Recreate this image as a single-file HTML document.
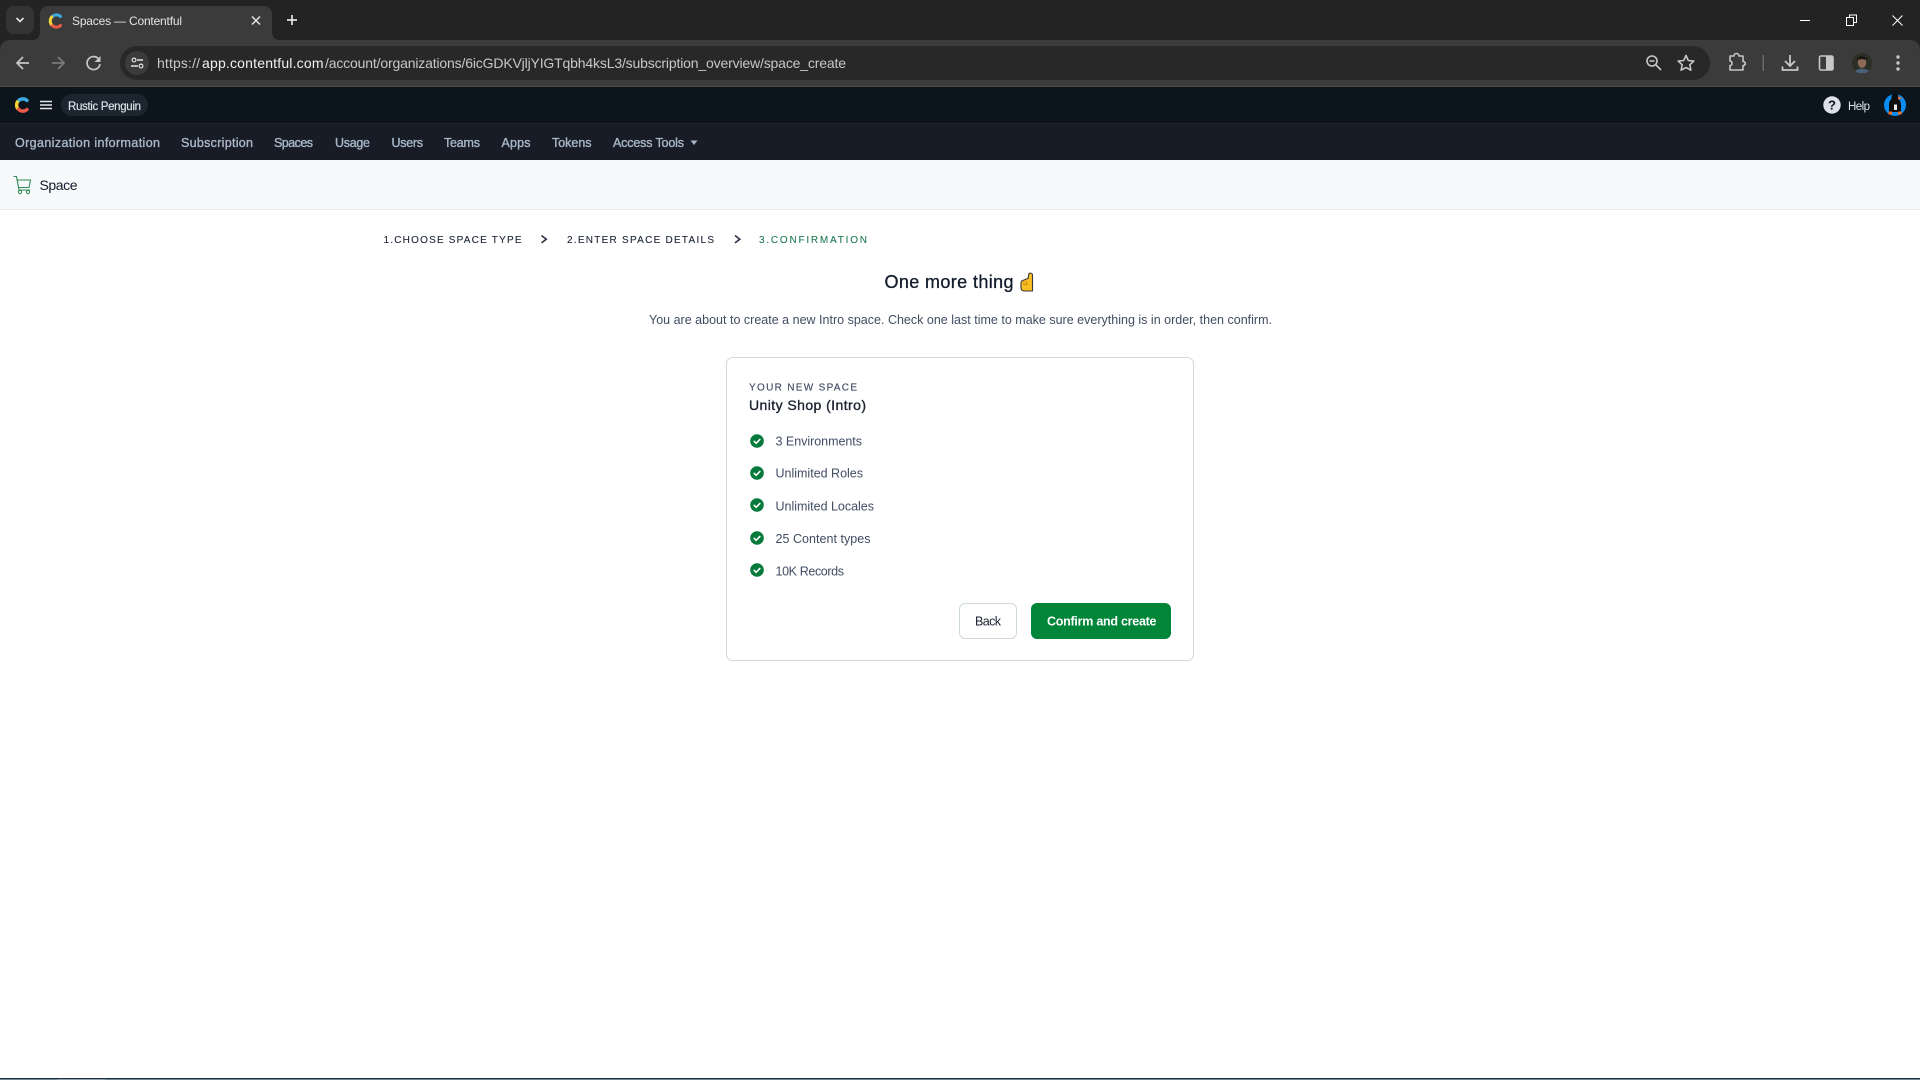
<!DOCTYPE html>
<html lang="en">
<head>
<meta charset="utf-8">
<title>Spaces — Contentful</title>
<style>
html,body{margin:0;padding:0;width:1920px;height:1080px;overflow:hidden;background:#fff}
svg{display:block;position:absolute;left:0;top:0}
text{font-family:"Liberation Sans",Arial,sans-serif;white-space:pre}
.nav{font-size:12.5px;fill:#aab7c8;stroke:#aab7c8;stroke-width:.35}
.li{font-size:12.5px;fill:#414d63}
.st{font-size:10px;fill:#1a2434;stroke:#1a2434;stroke-width:.1}
</style>
</head>
<body>
<svg width="1920" height="1080" viewBox="0 0 1920 1080" xmlns="http://www.w3.org/2000/svg">
<rect width="1920" height="1080" fill="#fff"/>
<!-- tab strip -->
<rect width="1920" height="52" fill="#222322"/>
<rect x="6" y="6" width="28" height="28" rx="8" fill="#333433"/>
<path d="M16.500 18l3.500 3.500 3.500-3.500" fill="none" stroke="#e3e3e3" stroke-width="1.600"/>
<!-- toolbar -->
<path d="M0 50c0-6 4-10 10-10h1900c6 0 10 4 10 10v37H0z" fill="#3b3b3b"/>
<path d="M32 40c5 0 8-3 8-8V14c0-4.500 3.500-8 8-8h216c4.500 0 8 3.500 8 8v18c0 5 3 8 8 8z" fill="#3b3b3b"/>
<path d="M60.500 16.500A6 6 0 0 0 52.500 16.300" fill="none" stroke="#3fa9e0" stroke-width="3" stroke-linecap="round"/>
<path d="M52.500 16.300A6 6 0 0 0 52.500 25.700" fill="none" stroke="#f7d432" stroke-width="3"/>
<path d="M52.500 25.700A6 6 0 0 0 60.500 25.500" fill="none" stroke="#ea5a47" stroke-width="3" stroke-linecap="round"/>
<text x="72" y="25" font-size="12" fill="#e3e3e3" textLength="110" lengthAdjust="spacing">Spaces — Contentful</text>
<path d="M252 16.500l8 8m0-8l-8 8" stroke="#e3e3e3" stroke-width="1.500" fill="none"/>
<path d="M292 15v10m-5-5h10" stroke="#e3e3e3" stroke-width="1.700" fill="none"/>
<!-- window controls -->
<path d="M1800 20.500h10" stroke="#fff" stroke-width="1"/>
<path d="M1846.500 17.500h7v8h-7z M1849.500 17.500v-2.500h7v7.500h-3" fill="none" stroke="#fff" stroke-width="1"/>
<path d="M1892.500 15.500l10 10m0-10l-10 10" stroke="#fff" stroke-width="1" fill="none"/>
<rect x="0" y="86" width="1920" height="1" fill="#4a4a4a"/>
<path d="M29 63H17m6-6l-6 6 6 6" fill="none" stroke="#c7c7c7" stroke-width="1.700"/>
<path d="M52 63h11m-5-6l6 6-6 6" fill="none" stroke="#7b7b7b" stroke-width="1.700"/>
<path d="M99.300 60A6.500 6.500 0 1 0 100 64" fill="none" stroke="#c7c7c7" stroke-width="1.700"/>
<path d="M100.500 56v6h-6z" fill="#c7c7c7"/>
<rect x="120" y="46" width="1590" height="34" rx="17" fill="#282828"/>
<circle cx="137" cy="63" r="12" fill="#3b3b3b"/>
<path d="M137 60h6M131 66h7" stroke="#e3e3e3" stroke-width="1.400" fill="none"/>
<circle cx="134" cy="60" r="1.900" fill="none" stroke="#e3e3e3" stroke-width="1.200"/>
<circle cx="141" cy="66" r="1.900" fill="none" stroke="#e3e3e3" stroke-width="1.200"/>
<text x="157" y="68" font-size="14" textLength="43" lengthAdjust="spacing" fill="#c7c7c7">https://</text>
<text x="202" y="68" font-size="14" textLength="121.500" lengthAdjust="spacing" fill="#f1f1f1">app.contentful.com</text>
<text x="325" y="68" font-size="14" textLength="521" lengthAdjust="spacing" fill="#c7c7c7">/account/organizations/6icGDKVjljYIGTqbh4ksL3/subscription_overview/space_create</text>
<circle cx="1652" cy="61" r="5" fill="none" stroke="#c7c7c7" stroke-width="1.600"/>
<path d="M1649.500 61h5M1656 65l5 5" stroke="#c7c7c7" stroke-width="1.600" fill="none"/>
<path d="M1686 55.500l2.300 5 5.500.6-4 3.700 1.100 5.400-4.900-2.700-4.900 2.700 1.100-5.400-4-3.700 5.500-.6z" fill="none" stroke="#c7c7c7" stroke-width="1.600" stroke-linejoin="round"/>
<path d="M1730 56h4c0-1.500 1-2.500 2.500-2.500s2.500 1 2.500 2.500h4v5.500c1.500 0 2.200.9 2.200 2s-.7 2-2.200 2V70h-13v-4.500c1.200 0 2-.9 2-2.200s-.8-2.300-2-2.300z" fill="none" stroke="#c7c7c7" stroke-width="1.600" stroke-linejoin="round"/>
<rect x="1762.500" y="55" width="1.500" height="16" fill="#6a6a6a"/>
<path d="M1790 55v11m-5-5l5 5 5-5M1782.500 66.500v3.500h15v-3.500" fill="none" stroke="#c7c7c7" stroke-width="1.800"/>
<rect x="1819.500" y="56" width="13.500" height="14" rx="1.500" fill="none" stroke="#c7c7c7" stroke-width="1.600"/>
<rect x="1826" y="56" width="7" height="14" fill="#c7c7c7"/>
<circle cx="1862" cy="63" r="10" fill="#2a2f26"/>
<ellipse cx="1862" cy="62.500" rx="4.200" ry="5.500" fill="#8d6a55"/>
<path d="M1857 60c0-5 10-5 10 0l-1 0c-2-1-6-1-8 0z" fill="#1c1712"/>
<path d="M1855 71c3-3 11-3 14 0l-3 2h-8z" fill="#4a6078"/>
<circle cx="1898" cy="57" r="1.700" fill="#c7c7c7"/>
<circle cx="1898" cy="63" r="1.700" fill="#c7c7c7"/>
<circle cx="1898" cy="69" r="1.700" fill="#c7c7c7"/>
<!-- app nav -->
<rect y="87" width="1920" height="36" fill="#0c141c"/>
<rect y="123" width="1920" height="37" fill="#171c26"/>
<rect y="123" width="1920" height="1" fill="#1f2631"/>
<path d="M27 100.500A6 6 0 0 0 18.500 100.800" fill="none" stroke="#3fa9e0" stroke-width="3.400" stroke-linecap="round"/>
<path d="M18 101A6.500 6.500 0 0 0 18 109" fill="none" stroke="#f7d432" stroke-width="3.400"/>
<path d="M18.500 109.200A6 6 0 0 0 27 109.500" fill="none" stroke="#ea5a47" stroke-width="3.400" stroke-linecap="round"/>
<path d="M40 101.500h12M40 105h12M40 108.500h12" stroke="#e6e9ec" stroke-width="1.400"/>
<rect x="61" y="94" width="87" height="22" rx="11" fill="#1d2630"/>
<text x="68" y="110" font-size="11.500" fill="#dde3ea" stroke="#dde3ea" stroke-width=".15" textLength="73" lengthAdjust="spacing">Rustic Penguin</text>
<text class="nav" x="15" y="147" textLength="145" lengthAdjust="spacing">Organization information</text>
<text class="nav" x="181" y="147" textLength="72" lengthAdjust="spacing">Subscription</text>
<text class="nav" x="274" y="147" textLength="39" lengthAdjust="spacing">Spaces</text>
<text class="nav" x="335" y="147" textLength="35" lengthAdjust="spacing">Usage</text>
<text class="nav" x="391.500" y="147" textLength="31.500" lengthAdjust="spacing">Users</text>
<text class="nav" x="444" y="147" textLength="36" lengthAdjust="spacing">Teams</text>
<text class="nav" x="501.500" y="147" textLength="29" lengthAdjust="spacing">Apps</text>
<text class="nav" x="552" y="147" textLength="39.500" lengthAdjust="spacing">Tokens</text>
<text class="nav" x="613" y="147" textLength="71" lengthAdjust="spacing">Access Tools</text>
<path d="M690.500 140.500h7l-3.500 4.500z" fill="#aab7c8"/>
<circle cx="1832" cy="105" r="8.700" fill="#dbe2e9"/>
<text x="1832" y="109.500" font-size="13" font-weight="bold" fill="#0c141c" text-anchor="middle">?</text>
<text x="1848" y="110" font-size="11.500" fill="#dde3ea" textLength="22" lengthAdjust="spacing">Help</text>
<circle cx="1895" cy="105" r="11" fill="#0a8cf0"/>
<path d="M1889 112v-7c0-3 1-5 2.500-6v-2c0-2.500 1.500-3.500 3.500-3.500s3.500 1 3.500 3.500v2c1.500 1 2.500 3 2.500 6v7z" fill="#0e0e0e"/>
<path d="M1898 96.500l4.500 1.800-4.500 1.200z" fill="#f26b1d"/>
<path d="M1894 104.500h3v5.500h-3z" fill="#e8e8e8"/>
<path d="M1888.500 111.500h3.500v3h-3.500zM1898 111.500h3.500v3H1898z" fill="#f26b1d"/>
<!-- sub header -->
<rect y="160" width="1920" height="49" fill="#f7f9fa"/>
<rect y="209" width="1920" height="1" fill="#e7ebee"/>
<path d="M13.500 176.500h3l2.500 13.500h11M17 180h13.500l-1.500 7.500H18.500" fill="none" stroke="#2e8b57" stroke-width="1.100"/>
<circle cx="20" cy="192" r="1.600" fill="none" stroke="#2e8b57"/>
<circle cx="28" cy="192" r="1.600" fill="none" stroke="#2e8b57"/>
<text x="39.500" y="190" font-size="14" fill="#111b2b" textLength="38" lengthAdjust="spacing">Space</text>
<!-- steps -->
<text class="st" x="383.500" y="243" textLength="138" lengthAdjust="spacing">1.CHOOSE SPACE TYPE</text>
<path d="M541.500 235.500l4.800 3.700-4.800 3.700" fill="none" stroke="#2b3444" stroke-width="1.600"/>
<text class="st" x="567" y="243" textLength="147" lengthAdjust="spacing">2.ENTER SPACE DETAILS</text>
<path d="M735 235.500l4.800 3.700-4.800 3.700" fill="none" stroke="#2b3444" stroke-width="1.600"/>
<text class="st" x="759" y="243" textLength="108" lengthAdjust="spacing" style="fill:#1f7a50;stroke:#1f7a50">3.CONFIRMATION</text>
<!-- heading -->
<text x="884.500" y="288" font-size="18" fill="#111b2b" stroke="#111b2b" stroke-width=".3" textLength="129" lengthAdjust="spacing">One more thing</text>
<path d="M1029 273.500c1.800-.8 3-.2 3.500 1V291h-8c-2.500 0-3.500-1.500-3.500-3.500V283c0-1.500 1-2.500 3-3 1-.3 3-1.500 4-1.500z" fill="#fbbf24" stroke="#3a3a3a" stroke-width="1.100" stroke-linejoin="round"/>
<path d="M1023 284c1.500 1 3.500 1 5 0M1024 281v4M1026.500 281v3.500" stroke="#c58a10" stroke-width=".8" fill="none"/>
<!-- paragraph -->
<text x="649" y="324" font-size="12.500" fill="#414d63" textLength="623" lengthAdjust="spacing">You are about to create a new Intro space. Check one last time to make sure everything is in order, then confirm.</text>
<!-- card -->
<rect x="726.500" y="357.500" width="467" height="303" rx="6" fill="#fff" stroke="#cfd9e0"/>
<text x="749" y="390.500" font-size="10" fill="#414d63" stroke="#414d63" stroke-width=".15" textLength="108" lengthAdjust="spacing">YOUR NEW SPACE</text>
<text x="749" y="410" font-size="14" fill="#1a2230" stroke="#1a2230" stroke-width=".35" textLength="117" lengthAdjust="spacing">Unity Shop (Intro)</text>
<circle cx="757" cy="441" r="6.800" fill="#067a3a"/><path d="M753.800 441l2.300 2.300 4.200-4.200" fill="none" stroke="#fff" stroke-width="1.600"/>
<circle cx="757" cy="473" r="6.800" fill="#067a3a"/><path d="M753.800 473l2.300 2.300 4.200-4.200" fill="none" stroke="#fff" stroke-width="1.600"/>
<circle cx="757" cy="505" r="6.800" fill="#067a3a"/><path d="M753.800 505l2.300 2.300 4.200-4.200" fill="none" stroke="#fff" stroke-width="1.600"/>
<circle cx="757" cy="538" r="6.800" fill="#067a3a"/><path d="M753.800 538l2.300 2.300 4.200-4.200" fill="none" stroke="#fff" stroke-width="1.600"/>
<circle cx="757" cy="570" r="6.800" fill="#067a3a"/><path d="M753.800 570l2.300 2.300 4.200-4.200" fill="none" stroke="#fff" stroke-width="1.600"/>
<text class="li" x="775.500" y="445.500" textLength="86.500" lengthAdjust="spacing">3 Environments</text>
<text class="li" x="775.500" y="477.500" textLength="87.500" lengthAdjust="spacing">Unlimited Roles</text>
<text class="li" x="775.500" y="510.500" textLength="98.500" lengthAdjust="spacing">Unlimited Locales</text>
<text class="li" x="775.500" y="543" textLength="95" lengthAdjust="spacing">25 Content types</text>
<text class="li" x="775.500" y="575.500" textLength="68.500" lengthAdjust="spacing">10K Records</text>
<rect x="959.500" y="603.500" width="57" height="35" rx="5.500" fill="#fff" stroke="#cfd9e0"/>
<text x="975" y="625.500" font-size="12.500" fill="#1a2230" textLength="26" lengthAdjust="spacing">Back</text>
<rect x="1031" y="603" width="140" height="36" rx="6" fill="#008539"/>
<text x="1047" y="625.500" font-size="12.500" font-weight="bold" fill="#fff" textLength="109.500" lengthAdjust="spacing">Confirm and create</text>
<!-- bottom edge -->
<rect y="1078" width="1920" height="1" fill="#22303a"/>
<rect y="1079" width="1920" height="1" fill="#6d8799"/>
<rect x="57" y="1079" width="48" height="1" fill="#8ba0b0"/>
</svg>
</body>
</html>
